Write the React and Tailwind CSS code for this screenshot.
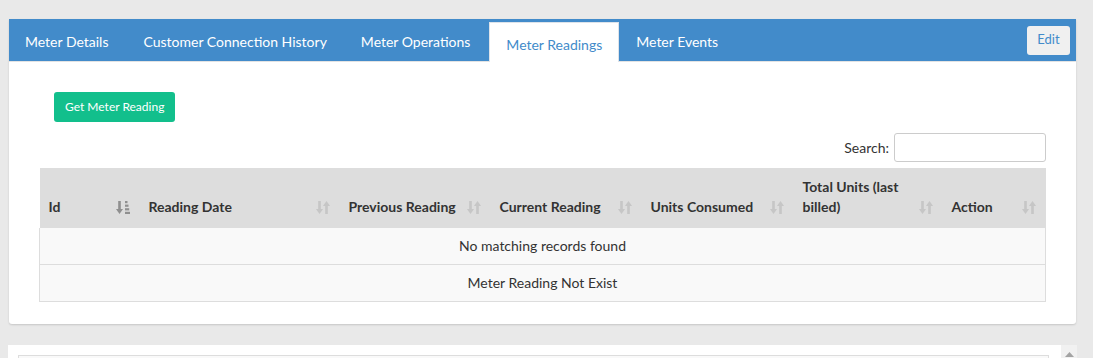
const tabs = [
  'Meter Details',
  'Customer Connection History',
  'Meter Operations',
  'Meter Readings',
  'Meter Events',
];

const columns = [
  { label: 'Id', width: 'w-[100px]', active: true },
  { label: 'Reading Date', width: 'w-[200px]' },
  { label: 'Previous Reading', width: 'w-[151px]' },
  { label: 'Current Reading', width: 'w-[151px]' },
  { label: 'Units Consumed', width: 'w-[152px]' },
  { label: 'Total Units (last billed)', width: 'w-[149px]', wrap: true },
  { label: 'Action', width: 'w-[103px]' },
];

const SortIcon = ({ active }) =>
  active ? (
    <svg width="14" height="15" viewBox="0 0 14 15" className="block">
      <path d="M3.5 1v9" stroke="#8f8f8f" strokeWidth="2.6" />
      <path d="M0 9h7l-3.5 5z" fill="#8f8f8f" />
      <rect x="9" y="1" width="2.5" height="2.2" fill="#8f8f8f" />
      <rect x="9" y="4.6" width="3.5" height="2.2" fill="#8f8f8f" />
      <rect x="9" y="8.2" width="4.2" height="2.2" fill="#8f8f8f" />
      <rect x="9" y="11.8" width="5" height="2.2" fill="#8f8f8f" />
    </svg>
  ) : (
    <svg width="14" height="15" viewBox="0 0 14 15" className="block">
      <path d="M3.5 1v9" stroke="#c6c6c6" strokeWidth="2.6" />
      <path d="M0 9h7l-3.5 5z" fill="#c6c6c6" />
      <path d="M10.5 14V5" stroke="#c6c6c6" strokeWidth="2.6" />
      <path d="M7 6h7l-3.5-5z" fill="#c6c6c6" />
    </svg>
  );

const App = () => {
  return (
    <div className="h-screen overflow-hidden bg-[#e9e9e9] pt-[19px] pl-[9px] font-['Lato','Noto_Sans',sans-serif] text-[#333]">
      {/* Main card */}
      <div className="w-[1067px] bg-white rounded-b-[3px] shadow-[0_1px_2px_rgba(0,0,0,0.15)]">
        {/* Tabs */}
        <div className="h-[43px] bg-[#428bca] border-b border-[#e3e3e3] flex items-end">
          {tabs.map((t) =>
            t === 'Meter Readings' ? (
              <div
                key={t}
                className="h-[40px] -mb-px ml-[2px] px-[16px] flex items-center pt-[3px] bg-white text-[#428bca] text-[14px] border-x border-t border-[#dde3ea]"
              >
                {t}
              </div>
            ) : (
              <div key={t} className="h-[40px] px-[17px] first:pl-[16px] first:pr-[18px] flex items-center text-white text-[14px]">
                {t}
              </div>
            )
          )}
          <button className="ml-auto mr-[6px] self-center h-[29px] w-[43px] rounded-[3px] bg-[#f0f0f0] text-[#428bca] text-[13px]">
            Edit
          </button>
        </div>

        {/* Body */}
        <div className="px-[30px] pt-[30px] pb-[22px]">
          <button className="ml-[15px] h-[30px] px-[11px] rounded-[3px] bg-[#12bf8c] text-white text-[12px]">
            Get Meter Reading
          </button>

          <div className="mt-[11px] flex justify-end items-center">
            <span className="text-[14px] mr-[5px]">Search:</span>
            <input className="w-[152px] h-[29px] border border-[#ccc] rounded-[3px] bg-white outline-none" />
          </div>

          <table className="mt-[6px] w-[1006px] table-fixed border-collapse">
            <thead>
              <tr className="bg-[#dddddd]">
                {columns.map((c) => (
                  <th
                    key={c.label}
                    className={`${c.width} relative align-bottom text-left font-bold text-[14px] leading-[20px] pl-[9px] pr-[30px] pt-[9px] pb-[11px] ${c.wrap ? '' : 'whitespace-nowrap'}`}
                  >
                    {c.label}
                    <span className="absolute right-[10px] bottom-[13px]">
                      <SortIcon active={c.active} />
                    </span>
                  </th>
                ))}
              </tr>
            </thead>
            <tbody>
              <tr className="bg-[#f9f9f9]">
                <td colSpan={7} className="h-[36px] text-center text-[14px] border-x border-[#ddd]">
                  No matching records found
                </td>
              </tr>
              <tr className="bg-[#f9f9f9]">
                <td colSpan={7} className="h-[37px] text-center text-[14px] border border-[#ddd]">
                  Meter Reading Not Exist
                </td>
              </tr>
            </tbody>
          </table>
        </div>
      </div>

      {/* Second panel */}
      <div className="mt-[21px] -ml-px w-[1069px] bg-white flex">
        <div className="flex-1 pl-[10px] pt-[10px]">
          <div className="w-[1031px] h-[30px] border border-[#ddd] bg-[#f9f9f9]" />
        </div>
        <div className="w-[16px] bg-[#f1f1f1] flex justify-center pt-[7px]">
          <svg width="9" height="5" viewBox="0 0 9 5">
            <path d="M0 5h9L4.5 0z" fill="#a3a3a3" />
          </svg>
        </div>
      </div>
    </div>
  );
};

export default App;
